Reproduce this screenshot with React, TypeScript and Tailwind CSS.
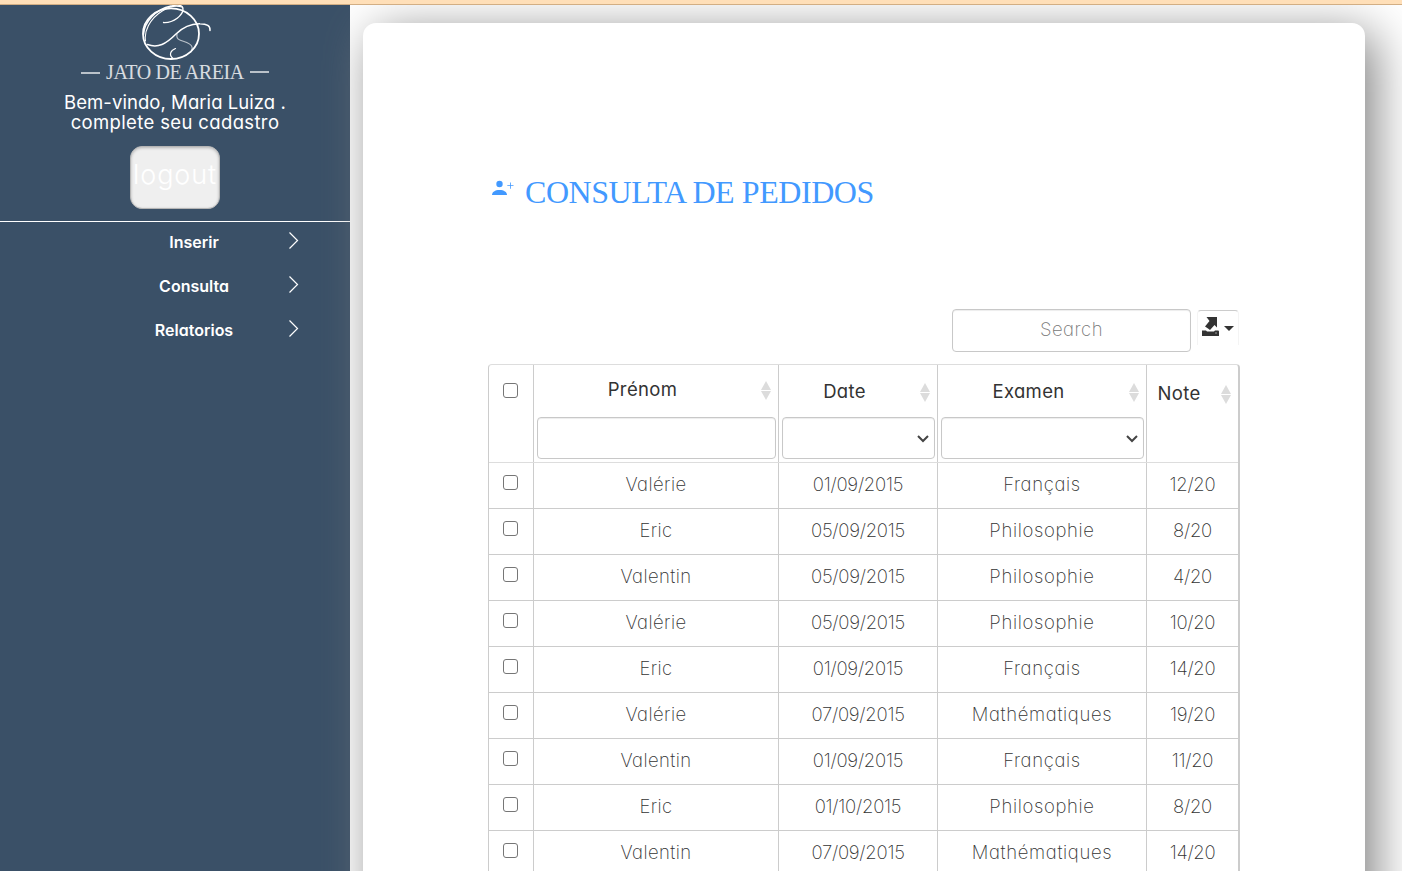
import React from "react";

const sans = "font-['Inter','Open_Sans',sans-serif] [font-feature-settings:'cv11']";

const rows: [string, string, string, string][] = [
  ["Valérie", "01/09/2015", "Français", "12/20"],
  ["Eric", "05/09/2015", "Philosophie", "8/20"],
  ["Valentin", "05/09/2015", "Philosophie", "4/20"],
  ["Valérie", "05/09/2015", "Philosophie", "10/20"],
  ["Eric", "01/09/2015", "Français", "14/20"],
  ["Valérie", "07/09/2015", "Mathématiques", "19/20"],
  ["Valentin", "01/09/2015", "Français", "11/20"],
  ["Eric", "01/10/2015", "Philosophie", "8/20"],
  ["Valentin", "07/09/2015", "Mathématiques", "14/20"],
];

const columns = "grid grid-cols-[44px_245px_159px_209px_92px]";
const cellTracking = ["tracking-[0.4px]", "tracking-[-0.25px]", "tracking-[0.65px]", "tracking-[-0.3px]"];

function Logo() {
  return (
    <div className="flex h-[78px] flex-col items-center text-white">
      <svg width="72" height="56" viewBox="0 0 72 56" fill="none" stroke="currentColor" strokeLinecap="round" className="shrink-0 overflow-visible">
        <ellipse cx="32" cy="28.700" rx="28" ry="25.300" strokeWidth="1.8" />
        <path d="M4.500 30C5 17 17 4 32 1c7-1.500 12-1 12 3 0 6-9 14-19.500 13.500" strokeWidth="1.3" />
        <path d="M6.500 36C5 27 10 14 24 5.500 31 1 38 .5 43 2" strokeWidth="1.100" />
        <path d="M8.500 39.500C19 43.500 27 39 37 29c8-8 15-10.500 24-10.300 7 0 10.500 2.300 10 6.800" strokeWidth="1.5" />
        <path d="M38 29c-1 5 2 6 7 7.500 8 2.500 10 6 6.500 11" strokeWidth="1.100" opacity=".65" />
        <path d="M36.500 43.500c-5 2-7 6.500-2.500 10" strokeWidth="1.200" />
      </svg>
      <div className="flex h-[22px] items-center">
        <span className="mt-[2px] h-[2px] w-[19px] bg-white/65" />
        <span className="mx-[6px] w-[138px] whitespace-nowrap text-center font-['Liberation_Serif',serif] text-[20px] leading-[22px] tracking-[-0.4px] text-white/80">JATO DE AREIA</span>
        <span className="h-[2px] w-[19px] bg-white/65" />
      </div>
    </div>
  );
}

function MenuItem({ label }: { label: string }) {
  return (
    <div className="flex h-11 items-start pt-[9px]">
      <span className="ml-[94px] w-[200px] text-center text-[16px] font-semibold leading-[22px]">{label}</span>
      <svg width="12" height="18" viewBox="0 0 12 18" fill="none" stroke="currentColor" strokeWidth="1.2" className="-ml-[6px]">
        <path d="M1.500 1.500 9.500 9.500l-8 8" />
      </svg>
    </div>
  );
}

function Checkbox() {
  return <span className="mr-[2px] block size-[15px] rounded-[3px] border border-[#767676] bg-white" />;
}

function Sorter() {
  return (
    <svg width="10" height="19" viewBox="0 0 10 19" fill="#dcdcdc" className="ml-[10px] mr-[7px] mt-[2px]">
      <path d="M5 0l5 9H0zM5 19l5-9H0z" />
    </svg>
  );
}

const field = "rounded-[4px] border border-[#c8c8c8] bg-white shadow-[inset_0_1px_1px_rgba(0,0,0,0.075)]";

function HeaderCell({ label, offset, children }: { label: string; offset: string; children?: React.ReactNode }) {
  return (
    <div className="border-l border-[#ccc]">
      <div className={"flex h-[52px] items-center " + offset}>
        <span className="flex-1 text-center text-[18.5px] leading-6 tracking-[0.35px]">{label}</span>
        <Sorter />
      </div>
      {children}
    </div>
  );
}

function Select() {
  return (
    <div className={field + " ml-[3px] mr-[2px] flex h-[42px] items-center justify-end pr-[5px] pt-[2px]"}>
      <svg width="12" height="8" viewBox="0 0 12 8" fill="none" stroke="#444" strokeWidth="2"><path d="M1 1l5 5 5-5" /></svg>
    </div>
  );
}

export default function App() {
  return (
    <div className={sans + " flex h-[871px] w-[1402px] flex-col overflow-hidden bg-white"}>
      <div className="h-[5px] shrink-0 border-b border-[#d2ae84] bg-[#ffdfb8]" />
      <div className="flex min-h-0 flex-1 overflow-hidden">
        <aside className="w-[350px] shrink-0 bg-[#3a5067] text-white">
          <Logo />
          <div className="mt-[9px] text-center text-[18.5px] leading-5">
            <p className="tracking-[0.06px]">Bem-vindo, Maria Luiza .</p>
            <p className="tracking-[0.36px]">complete seu cadastro</p>
          </div>
          <button className="mx-auto mt-[14px] flex h-[63px] w-[90px] items-center justify-center overflow-hidden rounded-[12px] border border-[#b5b5b5] bg-[#efefef] pb-[4px] text-[27px] font-light tracking-[0.9px] shadow-[inset_0_1px_3px_rgba(0,0,0,0.25)]">
            logout
          </button>
          <div className="mt-3 border-t border-white">
            <MenuItem label="Inserir" />
            <MenuItem label="Consulta" />
            <MenuItem label="Relatorios" />
          </div>
        </aside>
        <main className="ml-[13px] mt-[18px] h-[1000px] w-[1002px] shrink-0 rounded-[13px] bg-white pl-[125px] shadow-[10px_10px_50px_#808080]">
          <h1 className="mt-[149px] flex h-10 items-center text-[#4299ff]">
            <svg width="24" height="16" viewBox="0 0 24 16" fill="currentColor" className="-mt-2 ml-[3px]">
              <circle cx="8.500" cy="4" r="3.200" />
              <path d="M1 15c0-3 3-5 7.500-5s7.500 2 7.500 5z" />
              <path d="M19 2.500h.8v2.700h2.700v.8h-2.700v2.700H19V6h-2.700v-.8H19z" />
            </svg>
            <span className="ml-[10px] whitespace-nowrap font-['Liberation_Serif',serif] text-[32px] leading-10 tracking-[-0.44px]">CONSULTA DE PEDIDOS</span>
          </h1>
          <div className="mt-[97px] flex w-[751px] justify-end">
            <div className={field + " flex h-[43px] w-[239px] items-center justify-center pb-px text-[18.5px] font-extralight tracking-[0.5px] text-[#777]"}>Search</div>
            <div className="ml-[6px] mt-px flex h-[35px] w-[42px] items-start rounded-t-[4px] border-x border-t border-x-[#f4f4f4] border-t-[#ccc] pl-1 pt-[6px]">
              <svg width="17" height="19" viewBox="0 0 17 19" fill="#333">
                <path d="M0 13.500h4l1 1h7l1-1h3q1 0 1 1V19H0zM4.500 0H15v10.500l-2.500-2.500-4.500 5-2-1.500-3-2 4.500-5.500z" />
                <path d="M13.500 15.500h1v1h-1z" fill="white" />
              </svg>
              <svg width="10" height="5" viewBox="0 0 10 5" fill="#333" className="ml-[5px] mt-[9px]"><path d="M0 0h10L5 5z" /></svg>
            </div>
          </div>
          <div className="mt-3 w-[752px] rounded-t-[4px] border border-r-2 border-[#ccc] border-t-[#ddd] text-[18.5px] text-[#333]">
            <div className={columns + " h-[98px] border-b border-[#ddd]"}>
              <div className="flex justify-center pt-[18px]"><Checkbox /></div>
              <HeaderCell label="Prénom" offset="pb-1">
                <div className={field + " ml-[3px] mr-[2px] h-[42px]"} />
              </HeaderCell>
              <HeaderCell label="Date" offset="pb-0"><Select /></HeaderCell>
              <HeaderCell label="Examen" offset="pb-0"><Select /></HeaderCell>
              <HeaderCell label="Note" offset="pt-1" />
            </div>
            {rows.map((row, i) => (
              <div key={i} className={columns + " h-[46px] border-b border-[#ccc] font-extralight"}>
                <div className="flex justify-center pt-3"><Checkbox /></div>
                {row.map((cell, j) => (
                  <div key={j} className={"border-l border-[#ccc] text-center leading-[43px] " + cellTracking[j]}>{cell}</div>
                ))}
              </div>
            ))}
          </div>
        </main>
      </div>
    </div>
  );
}
